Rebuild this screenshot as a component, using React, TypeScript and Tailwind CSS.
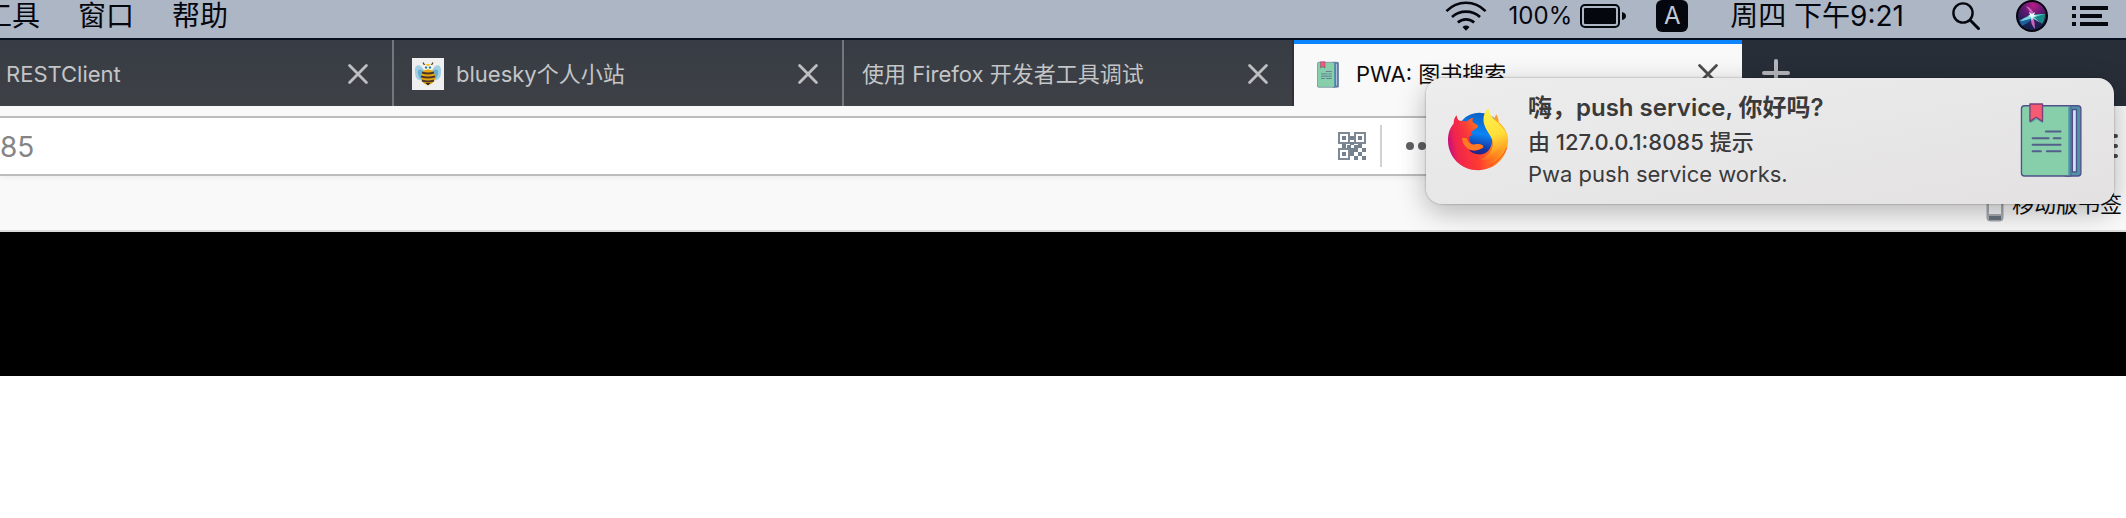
import React from "react";

function CloseIcon() {
  return (
    <svg viewBox="0 0 20 20" className="size-5" fill="none" stroke="currentColor" strokeWidth="2.8" strokeLinecap="round" aria-hidden="true">
      <path d="M1.600 1.600 18.400 18.400M18.400 1.600 1.600 18.400" />
    </svg>
  );
}

function BookIcon({ className }: { className: string }) {
  return (
    <svg viewBox="62 42 182 218" className={className} aria-hidden="true">
      <rect x="190" y="50" width="51" height="207" rx="9" fill="#4f93a8" stroke="#51518a" strokeWidth="4" />
      <path d="M216 61h12v184h-12z" fill="#d5e2fb" stroke="#51518a" strokeWidth="4" />
      <path d="M75 50h136v207H75q-9 0-9-9V59q0-9 9-9z" fill="#87cfab" stroke="#51518a" strokeWidth="4" />
      <path d="M204 52h7v203h-7z" fill="#4f93a8" />
      <path d="M92 90l17 -2 20 2v12l-19-12-18 12z" fill="#4fa5a3" />
      <path d="M91 45h37v51l-19-12-18 12z" fill="#f65b74" stroke="#7b3f79" strokeWidth="4" strokeLinejoin="round" />
      <path d="M138 126h43M99 146h47M161 146h20M99 165h82M99 184h24M141 184h40" stroke="#53608a" strokeWidth="6" strokeLinecap="round" />
    </svg>
  );
}

function BeeIcon() {
  return (
    <svg viewBox="0 0 32 32" className="size-8 shrink-0" aria-hidden="true">
      <path d="M0 0h32v32H0z" fill="#efefef" />
      <path d="M12 12C8 5 2 6 3 14c0 6 3 9 7 8zM20 12c4-7 10-6 9 2 0 6-3 9-7 8z" fill="#a3cfe4" />
      <path d="M11 13c-4-3-6-1-5 3 1 5 4 6 6 3zM21 13c4-3 6-1 5 3-1 5-4 6-6 3z" fill="#68aed0" />
      <path d="M12.500 7 11 4.500M19.500 7 21 4.500" stroke="#4b3321" strokeWidth="1.200" />
      <ellipse cx="16" cy="10" rx="5" ry="4" fill="#f5b81d" />
      <ellipse cx="16" cy="19" rx="7.200" ry="7.800" fill="#e9a912" />
      <path d="M10 14.500q6 2 12 0M9 18.500q7 2 14 0M10 22.500q6 2 12 0" fill="none" stroke="#4a3526" strokeWidth="2" />
      <circle cx="13.500" cy="9.500" r="2.500" fill="#fff" />
      <circle cx="18.500" cy="9.500" r="2.500" fill="#fff" />
      <circle cx="14" cy="9.500" r="1.200" fill="#237aa6" />
      <circle cx="18" cy="9.500" r="1.200" fill="#237aa6" />
      <path d="M13.500 25h5L16 27.500z" fill="#2f2119" />
    </svg>
  );
}

function FirefoxIcon() {
  return (
    <svg viewBox="84 54 180 188" className="h-[63px] w-[60px] shrink-0" aria-hidden="true">
      <defs>
        <linearGradient id="globe" x1="0.6" y1="0" x2="0.4" y2="1">
          <stop offset="0" stopColor="#0a5fc4" />
          <stop offset="0.45" stopColor="#0a84f5" />
          <stop offset="0.75" stopColor="#17349f" />
          <stop offset="1" stopColor="#3a1567" />
        </linearGradient>
        <linearGradient id="body" x1="0" y1="0.55" x2="1" y2="0.4">
          <stop offset="0" stopColor="#c30f80" />
          <stop offset="0.13" stopColor="#f0254e" />
          <stop offset="0.45" stopColor="#ff3a30" />
          <stop offset="0.72" stopColor="#ff7a1c" />
          <stop offset="1" stopColor="#ffbd22" />
        </linearGradient>
        <linearGradient id="head" x1="0" y1="0.8" x2="1" y2="0.2">
          <stop offset="0" stopColor="#ef2a48" stopOpacity="0" />
          <stop offset="1" stopColor="#ff7b1b" />
        </linearGradient>
        <linearGradient id="flame" x1="0.3" y1="0" x2="0.5" y2="1">
          <stop offset="0" stopColor="#fff04c" />
          <stop offset="0.55" stopColor="#ffdf3a" />
          <stop offset="0.8" stopColor="#ffad27" />
          <stop offset="1" stopColor="#ff7f1f" stopOpacity="0" />
        </linearGradient>
      </defs>
      <circle cx="178" cy="138" r="70" fill="url(#globe)" />
      <path d="M110 75C103 82 101 90 101 100C88 116 84 132 84 150C84 201 124 240 174 240C225 240 264 201 264 151C264 128 253 110 236 96C237 89 234 82 229 72C224 80 222 88 222 96L214 128C222 155 212 193 180 193C164 193 153 188 147 179C160 184 178 181 190 171C187 160 170 161 158 164C149 157 145 147 149 138L158 134C152 128 154 123 162 119L174 110C173 104 166 102 158 96C156 91 157 86 160 83C151 85 144 90 139 95C131 92 124 92 118 92C113 88 111 82 110 75Z" fill="url(#body)" />
      <path d="M118 92C126 91 133 92 139 95C144 89 151 85 160 83C156 88 156 92 158 96C166 101 174 104 174 110C169 116 162 118 158 121C149 125 150 132 149 138C139 141 130 146 124 153C119 136 113 112 118 92Z" fill="url(#head)" />
      <path d="M126 143C127 166 146 184 166 180C177 179 186 174 190 171C188 160 174 161 164 163C151 164 143 155 141 144Z" fill="#ff7b23" />
      <path d="M205 54C190 66 188 88 193 104C200 127 220 142 219 163C217 187 199 201 180 209C220 214 255 187 263 153C262 124 246 110 231 95C219 83 209 74 205 54Z" fill="url(#flame)" />
      <path d="M260 173C250 198 232 216 207 228" fill="none" stroke="#f74a30" strokeWidth="3" />
    </svg>
  );
}

function WifiIcon() {
  return (
    <svg viewBox="0 0 126 92" className="h-[30px] w-[42px]" fill="none" stroke="currentColor" strokeWidth="8" aria-hidden="true">
      <path d="M3 31C37-3 89-3 123 31M20 49c24-22 62-22 86 0M38 66c14-13 36-13 50 0" />
      <path d="M52 80q11-9 22 0L63 91z" fill="currentColor" stroke="none" />
    </svg>
  );
}

function BatteryIcon() {
  return (
    <svg viewBox="0 0 46 24" className="h-6 w-[46px]" aria-hidden="true">
      <rect x="1" y="1" width="38" height="22" rx="4" fill="none" stroke="currentColor" strokeWidth="2" />
      <rect x="4" y="4" width="32" height="16" rx="1" fill="currentColor" />
      <path d="M42 8q4 1 4 4t-4 4z" fill="currentColor" />
    </svg>
  );
}

function SiriIcon() {
  return (
    <svg viewBox="0 0 32 32" className="size-8" aria-hidden="true">
      <defs>
        <radialGradient id="siri-top" cx="0.55" cy="0.12" r="0.75">
          <stop offset="0" stopColor="#b81c86" />
          <stop offset="0.5" stopColor="#5c1a70" />
          <stop offset="1" stopColor="#17204f" />
        </radialGradient>
      </defs>
      <circle cx="16" cy="16" r="16" fill="#05040c" />
      <circle cx="16" cy="16" r="14" fill="url(#siri-top)" />
      <path d="M3 20q6-2 12-6l3 3q-5 6-12 9-2-3-3-6z" fill="#1b5f9c" />
      <path d="M17 15q6-1 12-1 0 6-3 10-4-5-9-7z" fill="#178a86" />
      <path d="M16 15 10 6q6 2 8 8l-1 2q2 7 2 13-5-5-4-12-5 3-11 4 5-4 11-6z" fill="#c765bf" />
      <path d="M4 21q6-4 11-6l14-1-11 3 7 6-9-5q-4 2-12 3z" fill="#6fdad8" />
      <path d="m13 12 3 2 3-2-1 3 3 1-4 1-1 4-1-4-3-1 2-1z" fill="#e9fbff" />
    </svg>
  );
}

function QrIcon() {
  return (
    <svg viewBox="0 0 28 28" className="size-7" aria-hidden="true">
      <g fill="none" stroke="#7d8995" strokeWidth="2">
        <rect x="1" y="1" width="10" height="10" />
        <rect x="17" y="1" width="10" height="10" />
        <rect x="1" y="17" width="10" height="10" />
      </g>
      <path d="M4 4h4v4H4zM20 4h4v4h-4zM4 20h4v4H4zM12 4h4v4h-4zM4 12h4v4H4zM12 10h4v3h-4zM9 13h4v4H9zM20 12h4v4h-4zM16 13h4v3h-4zM12 16h4v4h-4zM20 16h-4v4h4zM24 16h4v4h-4zM20 20h4v4h-4zM12 20h4v4h-4zM16 24h4v4h-4zM24 24h4v4h-4z" fill="#75818e" />
    </svg>
  );
}

function Tab({ title, icon, active = false, className }: { title: string; icon?: React.ReactNode; active?: boolean; className: string }) {
  return (
    <div
      className={`flex shrink-0 items-center gap-3 pr-6 ${className} ${
        active ? "border-t-4 border-[#0a84ff] bg-[#f9f9fa] pb-0.5 text-[#0c0c0d]" : "border-r-2 border-r-[#74777c] pt-0.5 text-[#c4c5c7]"
      }`}
    >
      {icon}
      <button type="button" role="tab" aria-selected={active} className="min-w-0 flex-1 truncate text-left">
        {title}
      </button>
      <button type="button" aria-label={`关闭 ${title}`} className={active ? "text-[#4c4c4d]" : "text-[#bebfc1]"}>
        <CloseIcon />
      </button>
    </div>
  );
}

function MenuBar() {
  return (
    <header className="flex h-10 items-center justify-between overflow-hidden border-b-2 border-[#07101f] bg-[#adb6c4] pb-1.5 text-[#05070f]">
      <nav className="-ml-4 flex gap-[38px] text-[28px] leading-8">
        <button type="button">工具</button>
        <button type="button">窗口</button>
        <button type="button">帮助</button>
      </nav>
      <div className="flex items-center pr-[18px]">
        <WifiIcon />
        <div className="ml-[22px] flex items-center gap-2 text-2xl leading-8">
          <span>100%</span>
          <BatteryIcon />
        </div>
        <span className="ml-[30px] flex size-8 items-center justify-center rounded-md bg-[#05070f] text-2xl leading-8 text-[#c3cad6]">A</span>
        <time className="ml-[42px] text-[28px] leading-8">周四 下午9:21</time>
        <button type="button" aria-label="搜索" className="ml-12">
          <svg viewBox="0 0 28 28" className="size-7" fill="none" stroke="currentColor" strokeWidth="2.4" aria-hidden="true">
            <circle cx="11" cy="11" r="9.600" />
            <path d="m18 18 9.500 9.500" strokeWidth="3" />
          </svg>
        </button>
        <button type="button" aria-label="Siri" className="ml-9">
          <SiriIcon />
        </button>
        <button type="button" aria-label="通知中心" className="ml-6">
          <svg viewBox="0 0 36 20" className="h-5 w-9" fill="currentColor" aria-hidden="true">
            <path d="M0 0h4v4H0zM8 0h28v4H8zM0 8h4v4H0zM8 8h22v4H8zM0 16h4v4H0zM8 16h28v4H8z" />
          </svg>
        </button>
      </div>
    </header>
  );
}

function Notification() {
  return (
    <aside
      role="alert"
      className="absolute top-[78px] right-3 flex h-[126px] w-[688px] items-center rounded-2xl bg-linear-to-br from-[#ededed] to-[#e3e1e2] pr-8 pb-[3px] pl-[22px] text-[#3a3a3b] shadow-[0_0_2px_rgba(0,0,0,0.4),0_8px_28px_rgba(0,0,0,0.28)]"
    >
      <FirefoxIcon />
      <div className="ml-5 flex-1 text-[22px] leading-8">
        <h2 className="text-2xl leading-9 font-semibold">嗨，push service, 你好吗?</h2>
        <p className="font-medium">由 127.0.0.1:8085 提示</p>
        <p>Pwa push service works.</p>
      </div>
      <BookIcon className="h-[74px] w-[62px] shrink-0" />
    </aside>
  );
}

export default function App() {
  return (
    <div className="relative min-h-screen overflow-hidden bg-white font-['Inter','Noto_Sans_CJK_SC',sans-serif]">
      <MenuBar />
      <div role="tablist" className="flex h-[66px] bg-[#282e38] text-[22px] leading-8">
        <div className="flex bg-linear-to-b from-[#373c44] to-[#3e4146]">
          <Tab title="RESTClient" className="w-[394px] pl-1.5" />
          <Tab title="bluesky个人小站" icon={<BeeIcon />} className="w-[450px] pl-[18px]" />
          <Tab title="使用 Firefox 开发者工具调试" className="w-[450px] border-r-[#303238] pl-[18px]" />
        </div>
        <Tab
          title="PWA: 图书搜索"
          active
          icon={
            <span className="flex size-8 shrink-0 items-center justify-center">
              <BookIcon className="h-[27px] w-[22px]" />
            </span>
          }
          className="w-[448px] pl-[18px]"
        />
        <button type="button" aria-label="新建标签页" className="ml-5 self-center text-[#b5b7ba]">
          <svg viewBox="0 0 28 28" className="size-7" stroke="currentColor" strokeWidth="4" strokeLinecap="round" aria-hidden="true">
            <path d="M14 2v24M2 14h24" />
          </svg>
        </button>
      </div>
      <div className="flex items-center bg-[#f9f9fa] pt-2.5 pr-2">
        <div className="flex h-[60px] w-3/4 items-center border-y-2 border-r-2 border-[#bcbcbc] bg-white shadow-[0_2px_6px_rgba(0,0,0,0.05)]">
          <input aria-label="网址" defaultValue="85" className="w-5/6 flex-1 pt-0.5 text-[28px] leading-8 text-[#858585] outline-none" />
          <button type="button" aria-label="二维码">
            <QrIcon />
          </button>
          <span className="ml-3.5 h-[42px] w-0.5 bg-[#d2d2d2]" />
          <button type="button" aria-label="页面操作" className="mr-[149px] ml-6">
            <svg viewBox="0 0 32 8" className="h-2 w-8" fill="#606062" aria-hidden="true">
              <circle cx="4" cy="4" r="4" />
              <circle cx="16" cy="4" r="4" />
              <circle cx="28" cy="4" r="4" />
            </svg>
          </button>
        </div>
        <button type="button" aria-label="打开菜单" className="ml-auto">
          <svg viewBox="0 0 28 24" className="h-6 w-7" stroke="#4a4a4b" strokeWidth="4" strokeLinecap="round" aria-hidden="true">
            <path d="M2 2h24M2 12h24M2 22h24" />
          </svg>
        </button>
      </div>
      <div className="flex h-14 items-center justify-end border-b-2 border-[#dcdcdc] bg-[#f9f9fa] pr-1">
        <a href="#mobile" className="flex items-center gap-2 pt-0.5 text-[22px] leading-8 text-[#0c0c0d]">
          <svg viewBox="0 0 18 36" className="h-9 w-[18px]" aria-hidden="true">
            <rect x="1" y="1" width="16" height="34" rx="3" fill="#a9aeb3" stroke="#a1a6aa" />
            <path d="M3 5h12v23H3z" fill="#f4f5f6" />
            <path d="M3 30h12v4H3z" fill="#66727d" />
          </svg>
          移动版书签
        </a>
      </div>
      <main>
        <div className="h-36 bg-black" />
      </main>
      <Notification />
    </div>
  );
}
